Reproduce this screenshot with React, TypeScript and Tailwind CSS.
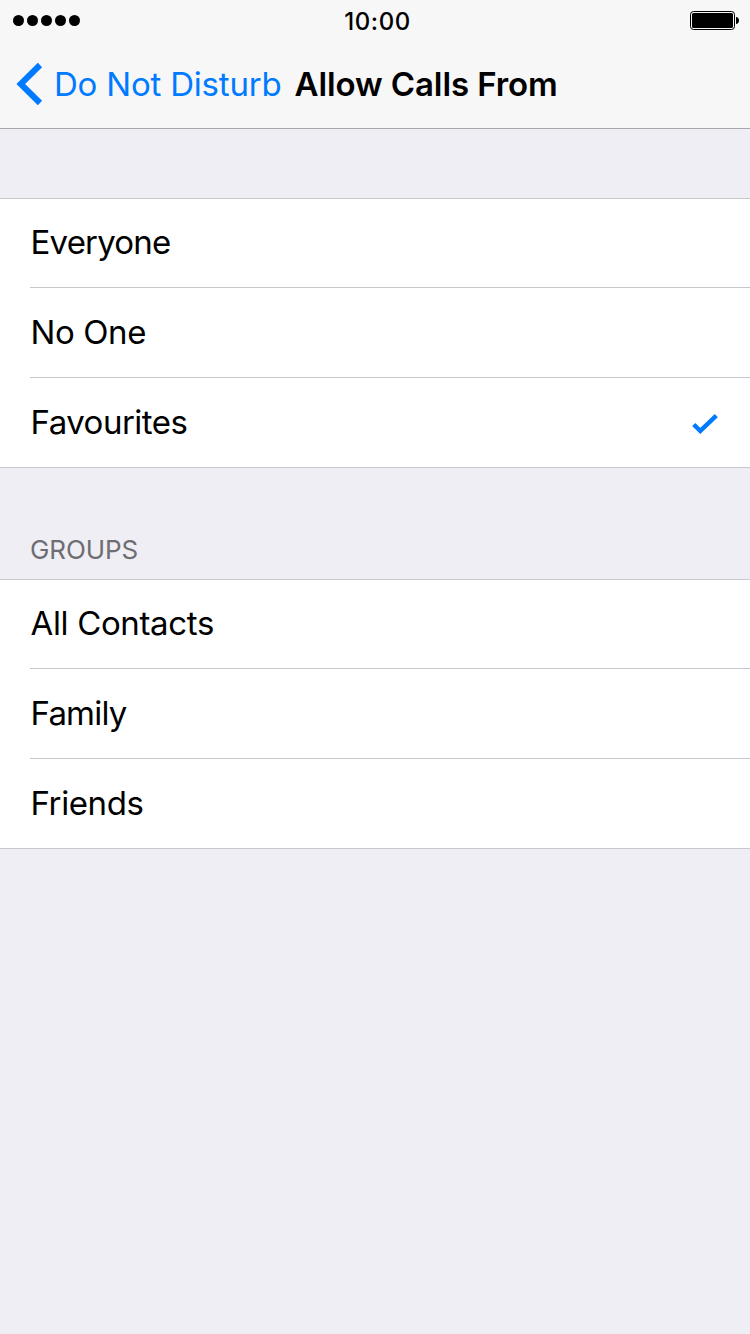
import React, { useState } from 'react';

type Option = { name: string; spacing: string };

const callOptions: Option[] = [
  { name: 'Everyone', spacing: 'tracking-[-0.8px]' },
  { name: 'No One', spacing: 'tracking-[-0.4px]' },
  { name: 'Favourites', spacing: 'tracking-[-0.5px]' },
];

const groupOptions: Option[] = [
  { name: 'All Contacts', spacing: 'tracking-[-0.35px]' },
  { name: 'Family', spacing: 'tracking-[-0.8px]' },
  { name: 'Friends', spacing: 'tracking-[-0.4px]' },
];

type OptionListProps = {
  options: Option[];
  selected: string;
  onSelect: (name: string) => void;
};

const CheckIcon: React.FC = () => (
  <svg width="28" height="22" viewBox="0 0 28 22" fill="none" className="mr-[31px] mt-[3px]">
    <path d="M2.7 11.5L9.3 17.9L25.3 2.7" stroke="#007AFF" strokeWidth="4.4" />
  </svg>
);

const StatusBar: React.FC = () => (
  <div className="grid h-10 grid-cols-3 items-center pl-[13px] pr-[11px]">
    <div className="flex gap-[3px]">
      {[1, 2, 3, 4, 5].map((dot) => (
        <span key={dot} className="h-[11px] w-[11px] rounded-full bg-black" />
      ))}
    </div>
    <span className="pl-[3px] pt-[4px] text-center text-[24px] font-medium leading-[36px] tracking-[0.6px] text-black">10:00</span>
    <svg width="50" height="20" viewBox="0 0 50 20" className="justify-self-end">
      <rect x="1.5" y="1.5" width="44" height="18" rx="3" fill="none" stroke="black" />
      <rect x="3" y="3" width="41" height="15" rx="1.5" fill="black" />
      <path d="M47 7C48.7 7 50 8.5 50 10.5C50 12.5 48.7 14 47 14Z" fill="black" />
    </svg>
  </div>
);

const OptionList: React.FC<OptionListProps> = ({ options, selected, onSelect }) => (
  <ul className="border-y border-[#C8C7CC] bg-white">
    {options.map((option, index) => (
      <li key={option.name} className="pl-[30px]">
        <button
          onClick={() => onSelect(option.name)}
          className={`flex w-full items-center justify-between text-left text-[33px] text-black ${option.spacing} ${
            index === 0 || index === options.length - 1 ? 'h-[89px]' : 'h-[90px]'
          } ${index < options.length - 1 ? 'border-b border-[#C8C7CC]' : ''}`}
        >
          <span className="pl-[0.5px]">{option.name}</span>
          {selected === option.name && <CheckIcon />}
        </button>
      </li>
    ))}
  </ul>
);

const App: React.FC = () => {
  const [selected, setSelected] = useState('Favourites');

  return (
    <div className="h-[1334px] w-[750px] overflow-hidden bg-[#EFEEF5] font-['Inter',sans-serif]">
      <header className="h-[129px] border-b border-[#A7A7AA] bg-[#F7F7F7]">
        <StatusBar />
        <nav className="flex h-[88px] items-center pl-[16px]">
          <button className="flex items-center text-[33px] text-[#007AFF]">
            <svg width="27" height="44" viewBox="0 0 27 44" fill="none">
              <path d="M24 3L4.7 22L24 41" stroke="#007AFF" strokeWidth="6" />
            </svg>
            <span className="ml-[11px] pt-[2px] tracking-[-0.2px]">Do Not Disturb</span>
          </button>
          <h1 className="ml-[13px] pt-[2px] text-[33px] font-semibold tracking-[-0.1px] text-black">Allow Calls From</h1>
        </nav>
      </header>

      <main className="pt-[69px]">
        <OptionList options={callOptions} selected={selected} onSelect={setSelected} />
        <h2 className="h-[111px] pl-[30px] pt-[62px] text-[26px] leading-[40px] tracking-[-0.1px] text-[#6D6D72]">GROUPS</h2>
        <OptionList options={groupOptions} selected={selected} onSelect={setSelected} />
      </main>
    </div>
  );
};

export default App;
